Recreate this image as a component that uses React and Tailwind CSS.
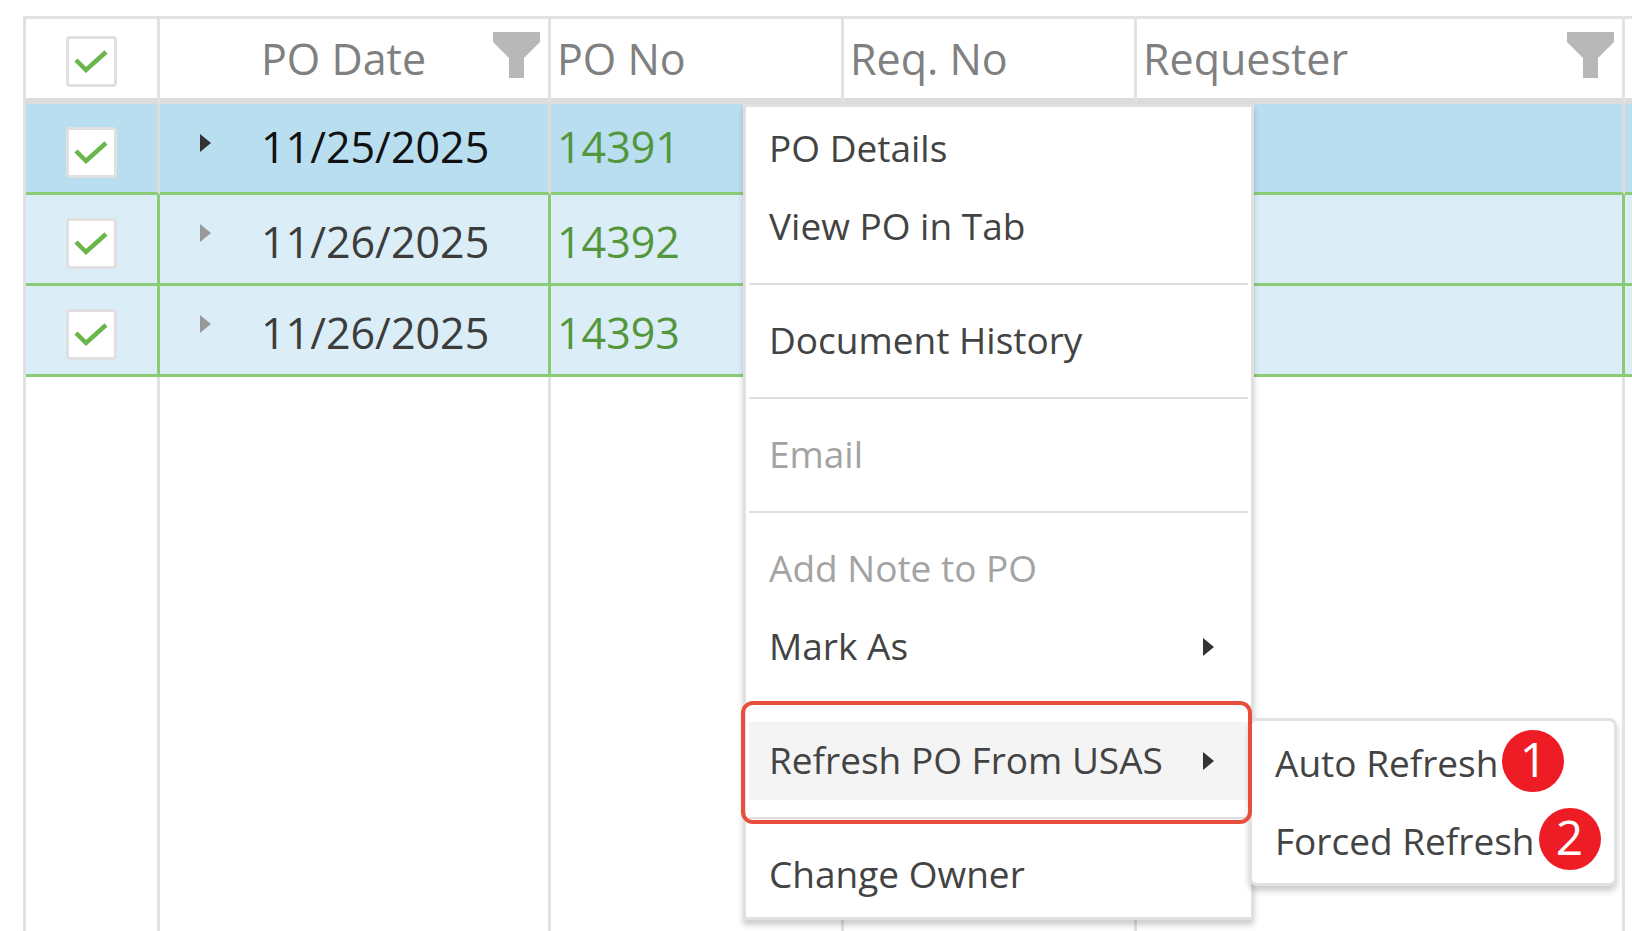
import { useState } from "react";
import clsx from "clsx";

const orders = [
  { id: 1, date: "11/25/2025", poNo: "14391" },
  { id: 2, date: "11/26/2025", poNo: "14392" },
  { id: 3, date: "11/26/2025", poNo: "14393" },
];

const menuSections = [
  [{ label: "PO Details" }, { label: "View PO in Tab" }],
  [{ label: "Document History" }],
  [{ label: "Email", disabled: true }],
  [{ label: "Add Note to PO", disabled: true }, { label: "Mark As", arrow: true }],
  [
    {
      label: "Refresh PO From USAS",
      arrow: true,
      active: true,
      children: ["Auto Refresh", "Forced Refresh"],
    },
  ],
  [{ label: "Change Owner" }],
];

const Arrow = ({ className }) => (
  <svg viewBox="0 0 11 18" className={clsx("h-[18px] w-[11px] shrink-0", className)} fill="currentColor">
    <path d="M0 0L11 9L0 18Z" />
  </svg>
);

const FilterButton = ({ label }) => (
  <button type="button" aria-label={label} className="mt-[13px] shrink-0 self-start text-[#b8b8b8]">
    <svg viewBox="0 0 47 46" className="h-[46px] w-[47px]" fill="currentColor">
      <path d="M0 0H47V10L31 26V46H16V26L0 10Z" />
    </svg>
  </button>
);

const Checkbox = ({ label, checked, onChange }) => (
  <label className="mx-auto grid h-[51px] w-[51px]">
    <input
      type="checkbox"
      aria-label={label}
      checked={checked}
      onChange={onChange}
      className="col-start-1 row-start-1 appearance-none rounded border-3 border-[#e0e0e0] bg-white"
    />
    {checked && (
      <svg
        viewBox="0 0 51 51"
        className="pointer-events-none col-start-1 row-start-1"
        fill="none"
        stroke="#6bb64a"
        strokeWidth="4.5"
      >
        <path d="M10 24L20 34L40 16" />
      </svg>
    )}
  </label>
);

const MenuItem = ({ item }) => (
  <li className="relative">
    <button
      type="button"
      disabled={item.disabled}
      className={clsx(
        "flex h-[78px] w-full items-center justify-between pr-[34px] pl-5 text-left",
        item.disabled ? "text-[#a3a3a3]" : "text-[#434343]",
        item.active && "bg-[#f4f4f4]"
      )}
    >
      <span className="pb-1">{item.label}</span>
      {item.arrow && <Arrow className="text-[#333]" />}
    </button>
    {item.children && (
      <>
        <SubMenu items={item.children} />
        <div className="pointer-events-none absolute -top-[21px] -right-1 -bottom-6 -left-2 rounded-xl border-4 border-[#e74f3c]" />
      </>
    )}
  </li>
);

const SubMenu = ({ items }) => (
  <ul className="absolute -top-1 left-full ml-px w-[368px] rounded-lg border-3 border-[#e2e2e2] bg-white p-[3px] shadow-[0_5px_6px_rgba(0,0,0,0.2)]">
    {items.map((label, index) => (
      <li key={label}>
        <button
          type="button"
          className="flex h-[78px] w-full items-center gap-1 pl-5 text-left whitespace-nowrap text-[#434343]"
        >
          <span className="pb-0.5">{label}</span>
          <span className="mb-1 flex h-[62px] w-[62px] shrink-0 items-center justify-center rounded-full bg-[#ee1c25] pb-1 text-5xl text-white">
            {index + 1}
          </span>
        </button>
      </li>
    ))}
  </ul>
);

const ContextMenu = () => (
  <div className="absolute top-[104px] left-[743px] w-[511px] border-3 border-[#e0e0e0] bg-white p-[3px] text-[37px] leading-none shadow-[0_5px_6px_rgba(0,0,0,0.2)]">
    {menuSections.map((section, index) => (
      <div key={index}>
        {index > 0 && <hr className="my-[17px] border-t-2 border-[#dedede]" />}
        <ul>
          {section.map((item) => (
            <MenuItem key={item.label} item={item} />
          ))}
        </ul>
      </div>
    ))}
  </div>
);

const App = () => {
  const [selected, setSelected] = useState([1, 2, 3]);

  const toggle = (id) =>
    setSelected((prev) => (prev.includes(id) ? prev.filter((x) => x !== id) : [...prev, id]));

  const toggleAll = () =>
    setSelected((prev) => (prev.length === orders.length ? [] : orders.map((o) => o.id)));

  const headCell = "border-t-3 border-b-6 border-t-[#e2e2e2] border-r-[#e2e2e2] border-b-[#dcdcdc] p-0";

  return (
    <div className="relative min-h-screen overflow-hidden bg-white pt-4 pl-[23px] font-['Open_Sans','Noto_Sans',sans-serif]">
      <table className="h-[calc(100vh-16px)] w-full table-fixed border-separate border-spacing-0 border-l-3 border-[#e0e0e0] text-[43px] leading-none">
        <colgroup>
          <col className="w-[134px]" />
          <col className="w-[391px]" />
          <col className="w-[293px]" />
          <col className="w-[293px]" />
          <col />
          <col className="w-[7px]" />
        </colgroup>
        <thead>
          <tr className="h-[88px] text-left text-[#808080]">
            <th className={clsx(headCell, "border-r-3")}>
              <div className="pt-1.5">
                <Checkbox
                  label="Select all"
                  checked={selected.length === orders.length}
                  onChange={toggleAll}
                />
              </div>
            </th>
            <th className={clsx(headCell, "border-r-3")}>
              <div className="flex h-[79px] items-center justify-between pr-2 pl-[101px] font-normal">
                PO Date
                <FilterButton label="Filter PO Date" />
              </div>
            </th>
            <th className={clsx(headCell, "border-r-3 font-normal")}>
              <div className="pl-1.5">PO No</div>
            </th>
            <th className={clsx(headCell, "border-r-3 font-normal")}>
              <div className="pl-1.5">Req. No</div>
            </th>
            <th className={clsx(headCell, "border-r-3")}>
              <div className="flex h-[79px] items-center justify-between pr-2 pl-1.5 font-normal">
                Requester
                <FilterButton label="Filter Requester" />
              </div>
            </th>
            <th className={headCell} />
          </tr>
        </thead>
        <tbody>
          {orders.map((order, index) => {
            const current = index === 0;
            const cell = clsx(
              "border-r-3 border-b-3 border-b-[#8ccb76] p-0",
              current ? "border-r-[#dcdcdc]" : "border-r-[#8ccb76]"
            );
            return (
              <tr
                key={order.id}
                className={clsx("h-[91px]", current ? "bg-[#b8deef] text-[#111]" : "bg-[#dbeef7] text-[#3c3c3c]")}
              >
                <td className={cell}>
                  <div className="pt-2">
                    <Checkbox
                      label={`Select ${order.poNo}`}
                      checked={selected.includes(order.id)}
                      onChange={() => toggle(order.id)}
                    />
                  </div>
                </td>
                <td className={cell}>
                  <div className={clsx("flex h-[88px] items-center", current ? "pb-1" : "pt-1")}>
                    <button
                      type="button"
                      aria-label={`Expand ${order.poNo}`}
                      className={clsx("w-[101px] pl-10", current ? "pb-1.5 text-[#333]" : "pb-4 text-[#999]")}
                    >
                      <Arrow />
                    </button>
                    {order.date}
                  </div>
                </td>
                <td className={cell}>
                  <div className={clsx("flex h-[88px] items-center pl-1.5", current ? "pb-1" : "pt-1")}>
                    <a href="#po" className="text-[#53963c]">
                      {order.poNo}
                    </a>
                  </div>
                </td>
                <td className={cell} />
                <td className={cell} />
                <td className="border-b-3 border-[#8ccb76] p-0" />
              </tr>
            );
          })}
          <tr>
            {[1, 2, 3, 4, 5].map((col) => (
              <td key={col} className="border-r-3 border-[#e2e2e2] p-0" />
            ))}
            <td className="p-0" />
          </tr>
        </tbody>
      </table>
      <ContextMenu />
    </div>
  );
};

export default App;
